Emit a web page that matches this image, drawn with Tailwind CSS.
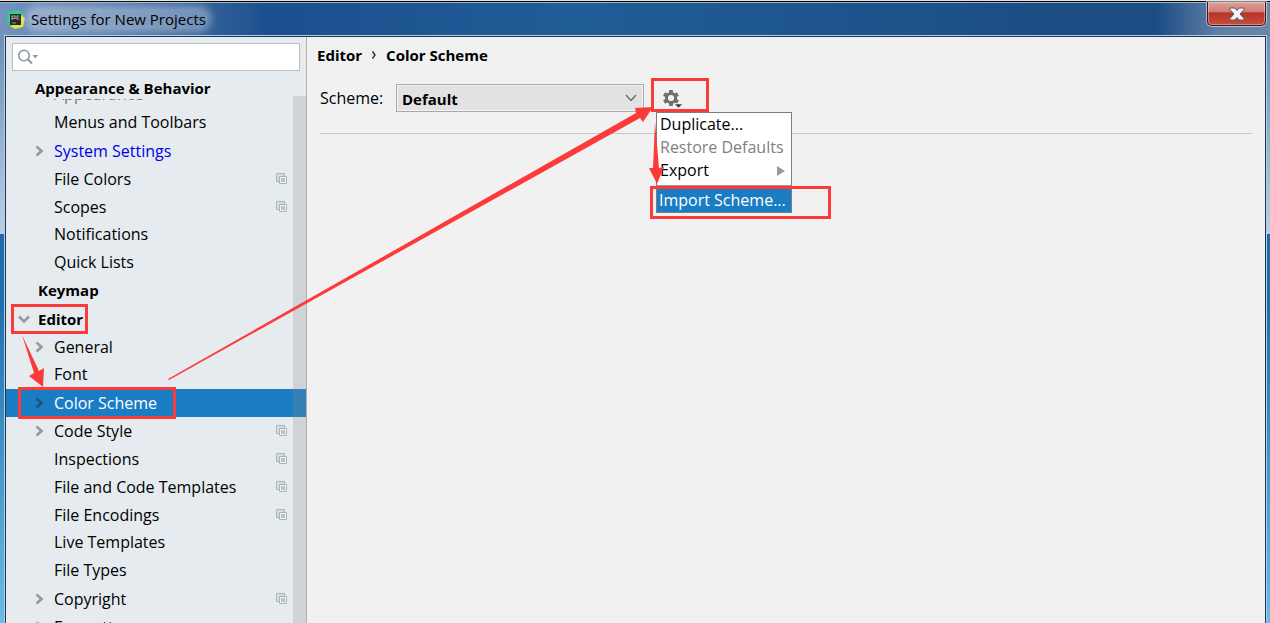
<!DOCTYPE html>
<html lang="en">
<head>
  <meta charset="UTF-8" />
  <meta name="viewport" content="width=device-width, initial-scale=1.0"/>
  <title>Settings for New Projects</title>
  <script src="https://cdn.jsdelivr.net/npm/@tailwindcss/browser@4"></script>
</head>
<body class="relative flex h-screen flex-col overflow-hidden bg-[#1c4f8c] font-['Open_Sans','Noto_Sans',sans-serif] text-[16px] leading-7 text-black">
  <svg class="hidden">
    <symbol id="right" viewBox="0 0 10 12"><path d="M2.500 1.500 7.500 6l-5 4.500" fill="none" stroke="currentColor" stroke-width="2.600"/></symbol>
    <symbol id="down" viewBox="0 0 12 10"><path d="M1 2.500 6 7.500l5-5" fill="none" stroke="currentColor" stroke-width="2.600"/></symbol>
    <symbol id="copy" viewBox="0 0 12 12">
      <path d="M.5.5h8v8h-8z" fill="#d5dde1" stroke="#a9b3ba"/>
      <path d="M3.500 3.500h7v7h-7z" fill="#edf1f3" stroke="#a9b3ba"/>
      <path d="M5 6h4M5 8h4" stroke="#a9b3ba" stroke-width="1.400"/>
    </symbol>
  </svg>

  <header class="h-[36px] shrink-0 border-t border-[#dfe9df]">
    <div class="flex h-full items-start justify-between border-t border-black bg-[linear-gradient(90deg,#7493be,#5279aa_120px,#1b4f8d_270px,#215d97_45%,#1b4c84_85%,#1b4c84_91%,#617fa7_96%,#6a86a9)] shadow-[inset_0_1px_0_#9eb6d0]">
      <div class="flex items-center pt-[7px] pl-[7px]">
        <svg class="size-[19px]" viewBox="0 0 19 19">
          <path d="M1 2 11 0l6 4-3 12-11 1-3-5z" fill="#2fd08a"/>
          <path d="m14 5 4 3-2 9-8 2-5-3 10-4z" fill="#e3e04a"/>
          <path d="M3 4h11v11H3z" fill="#25282b"/>
          <path d="M5 10V6h3v2.500H5M12.500 6H10v3h2.500" stroke="#a9a6a4" stroke-width="1.200" fill="none"/>
          <path d="M5 13h4" stroke="#8d9295"/>
        </svg>
        <h1 class="ml-[3px] rounded-full bg-white/30 px-[2px] text-[15px] leading-5 shadow-[0_0_7px_4px_rgba(255,255,255,0.3)]">Settings for New Projects</h1>
      </div>
      <button aria-label="Close" class="mr-1 flex h-6 w-[59px] items-center justify-center rounded-b-[5px] border border-t-0 border-[#3b1620] bg-[linear-gradient(#dfa19b,#cf7b75_45%,#b93222_46%,#c25040)] shadow-[inset_0_0_0_1px_rgba(255,255,255,0.35),0_0_0_1px_rgba(255,255,255,0.5)]">
        <svg class="h-[14px] w-4" viewBox="0 0 16 14"><path d="M1 1h5l2 2.500L10 1h5v1.500L11 7l4 4.500V13h-5l-2-2.500L6 13H1v-1.500L5 7 1 2.500z" fill="#f5f5f5" stroke="#5b5867"/></svg>
      </button>
    </div>
  </header>

  <div class="flex min-h-0 grow bg-[linear-gradient(#6f8fb8,#b9d0e5_198px,#1f6aac_198px,#2070b0_270px,#69bce7)]">
    <div class="mr-[4px] ml-[5px] flex min-w-0 grow border-x border-t border-[#173757] shadow-[0_0_0_1px_#b7cde0]">
      <aside class="flex w-[301px] shrink-0 flex-col border-r border-[#b0b0b0] bg-[#e6ebef]">
        <label class="mx-[6px] mt-[6px] flex h-7 shrink-0 items-center border border-[#bbbec0] bg-white pl-[5px]">
          <svg class="h-4 w-[21px] shrink-0" viewBox="0 0 21 16" fill="none"><circle cx="6" cy="6.500" r="5.300" stroke="#8c979d" stroke-width="1.600"/><path d="m10 10.500 4 4" stroke="#8c979d" stroke-width="2"/><path d="M14.500 6h5.500l-2.700 3.500z" fill="#8c979d"/></svg>
          <input type="search" aria-label="Search settings" class="min-w-0 grow outline-none" />
        </label>
        <div class="relative mt-1 min-h-0 grow overflow-hidden">
          <h2 class="absolute top-0 left-0 z-10 h-6 w-full bg-[#e6ebef] pl-[29px] text-[15px] leading-[26px] font-bold">Appearance &amp; Behavior</h2>
          <div class="absolute top-[21px] right-0 bottom-0 z-20 w-[13px] bg-[#8c8c94]/25"></div>
          <ul class="pt-[6px] leading-[26px]">
            <li class="h-7 pl-12 text-[#777]">Appearance</li>
            <li class="h-7 pl-12">Menus and Toolbars</li>
            <li class="flex h-7 items-center pl-7 text-[#0000e6]"><svg class="mr-[10px] h-3 w-[10px] text-[#999]"><use href="#right"/></svg>System Settings</li>
            <li class="flex h-7 items-center pr-[18px] pl-12"><span class="grow">File Colors</span><svg class="size-3"><use href="#copy"/></svg></li>
            <li class="flex h-7 items-center pr-[18px] pl-12"><span class="grow">Scopes</span><svg class="size-3"><use href="#copy"/></svg></li>
            <li class="h-7 pl-12">Notifications</li>
            <li class="h-7 pl-12">Quick Lists</li>
            <li class="h-7 pl-8 text-[15px] font-bold">Keymap</li>
            <li class="flex h-7 items-center pl-[12px] text-[15px] font-bold"><svg class="mr-2 h-[10px] w-3 text-[#999]"><use href="#down"/></svg>Editor</li>
            <li class="flex h-7 items-center pl-7"><svg class="mr-[10px] h-3 w-[10px] text-[#999]"><use href="#right"/></svg>General</li>
            <li class="h-7 pl-12">Font</li>
            <li class="flex h-7 items-center bg-[#1a7dc4] pl-7 text-white"><svg class="mr-[10px] h-3 w-[10px] text-[#175684]"><use href="#right"/></svg>Color Scheme</li>
            <li class="flex h-7 items-center pr-[18px] pl-7"><svg class="mr-[10px] h-3 w-[10px] text-[#999]"><use href="#right"/></svg><span class="grow">Code Style</span><svg class="size-3"><use href="#copy"/></svg></li>
            <li class="flex h-7 items-center pr-[18px] pl-12"><span class="grow">Inspections</span><svg class="size-3"><use href="#copy"/></svg></li>
            <li class="flex h-7 items-center pr-[18px] pl-12"><span class="grow">File and Code Templates</span><svg class="size-3"><use href="#copy"/></svg></li>
            <li class="flex h-7 items-center pr-[18px] pl-12"><span class="grow">File Encodings</span><svg class="size-3"><use href="#copy"/></svg></li>
            <li class="h-7 pl-12">Live Templates</li>
            <li class="h-7 pl-12">File Types</li>
            <li class="flex h-7 items-center pr-[18px] pl-7"><svg class="mr-[10px] h-3 w-[10px] text-[#999]"><use href="#right"/></svg><span class="grow">Copyright</span><svg class="size-3"><use href="#copy"/></svg></li>
            <li class="flex h-7 items-center pl-7"><svg class="mr-[10px] h-3 w-[10px] text-[#999]"><use href="#right"/></svg>Formatter</li>
          </ul>
        </div>
      </aside>

      <main class="min-w-0 grow bg-[#f1f1f1] pt-1 pr-[13px] pl-[10px]">
        <nav class="flex items-center text-[15px] font-bold">
          <span>Editor</span>
          <svg class="mx-[10px] h-2 w-1" viewBox="0 0 4 8"><path d="m.5.5 2.500 3.500L.5 7.500" fill="none" stroke="#222" stroke-width="1.300"/></svg>
          <span>Color Scheme</span>
        </nav>
        <div class="mt-[15px] ml-[3px] flex h-7 items-center">
          <label for="scheme" class="w-[76px]">Scheme:</label>
          <div class="relative w-[248px]">
            <select id="scheme" class="block h-7 w-full appearance-none border border-[#a9a9a9] bg-[#e2e2e2] pl-[5px] text-[15px] font-bold shadow-[inset_0_0_0_1px_#f4f4f4]"><option>Default</option></select>
            <svg class="pointer-events-none absolute top-[10px] right-[7px] h-2 w-3" viewBox="0 0 12 8" fill="none"><path d="m1 1 5 5.500L11 1" stroke="#666" stroke-width="1.300"/></svg>
          </div>
          <div class="relative ml-[19px]">
            <button aria-label="Scheme actions" class="block h-5 w-5">
              <svg class="size-5" viewBox="0 0 20 20">
                <circle cx="8" cy="10" r="4.600" fill="none" stroke="#6e6e6e" stroke-width="3"/>
                <path d="M8 2v3M8 15v3M1.100 6l2.600 1.500M12.300 12.500l2.600 1.500M1.100 14l2.600-1.500M12.300 7.500 14.900 6" stroke="#6e6e6e" stroke-width="3.800"/>
                <path d="M11.500 16h8l-4 4z" fill="#333" stroke="#f1f1f1" stroke-width=".6"/>
              </svg>
            </button>
            <div class="absolute top-6 -left-[7px] w-[136px] border border-[#7d7d7d] bg-white leading-[23px]">
              <button class="block w-full pl-[3px] text-left">Duplicate...</button>
              <button disabled class="block w-full pl-[3px] text-left whitespace-nowrap text-[#808080]">Restore Defaults</button>
              <button class="flex w-full items-center justify-between pr-[6px] pl-[3px]">Export<svg class="h-[10px] w-2" viewBox="0 0 8 10"><path d="M0 0v10l8-5z" fill="#999"/></svg></button>
              <hr class="mt-[3px] mb-[3px] border-[#999]" />
              <button class="block w-full bg-[#1a7dc4] pl-[2px] text-left whitespace-nowrap text-white">Import Scheme...</button>
            </div>
          </div>
        </div>
        <hr class="mt-[21px] ml-[3px] border-[#c9c9c9]" />
      </main>
    </div>
  </div>

  <!-- step markers drawn over the dialog -->
  <svg class="pointer-events-none absolute top-0 left-0 z-30 h-[623px] w-[1270px]" viewBox="0 0 1270 623">
    <g fill="none" stroke="#fc3a39" stroke-width="3">
      <path d="M12.500 305.500h74v27h-74z"/>
      <path d="M19.500 388.500h155v29h-155z"/>
      <path d="M652.500 79.500h55v31h-55z"/>
      <path d="M651.500 187.500h178v30h-178z"/>
    </g>
    <g fill="#fc3a39">
      <path d="m22 335 17 36 5-3-1 19-14-11 5-3z"/>
      <path d="m168 379 468-266-1-5 18-1-10 15-3-4L169 380z"/>
      <path d="m655 122 4 46 5-1-7 17-8-16 4 0z"/>
    </g>
  </svg>
</body>
</html>
